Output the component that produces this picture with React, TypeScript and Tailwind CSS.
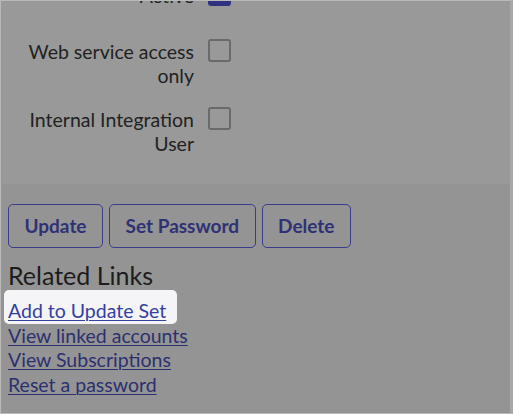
import React from 'react';

type CheckRowProps = {
  label: string,
  checked?: boolean,
  className?: string,
};

const CheckRow = ({ label, checked, className }: CheckRowProps) => (
  <div className={`flex items-start ${className ?? ''}`}>
    <div className="w-[186px] text-right text-[19.5px] leading-[24px] text-[#222222]">{label}</div>
    <div className="ml-[14px]">
      <div
        className={`w-[23px] h-[23px] rounded-[3px] border-2 -mt-px ${checked ? 'bg-[#2f3280] border-[#2f3280]' : 'border-[#6a6a6a]'}`}
      />
    </div>
  </div>
);

const ActionButton = ({ text }: { text: string }) => (
  <button
    type="button"
    className="h-[44px] px-[15.5px] rounded-[5px] border-[1.5px] border-[#3a3d8c] text-[19px] font-bold text-[#2f3175] bg-transparent"
  >
    {text}
  </button>
);

const links = ['View linked accounts', 'View Subscriptions', 'Reset a password'];

const App = () => (
  <div
    className="w-[513px] h-[414px] overflow-hidden border border-[#b9b9b9] border-r-[3px] border-r-[#a8a8a8] bg-[#949494] flex flex-col"
    style={{ fontFamily: 'Lato, "Open Sans", sans-serif' }}
  >
    <div className="bg-[#999999] pl-[7px] h-[183px] shrink-0">
      <CheckRow label="Active" checked className="-mt-[17px] mb-[32px]" />
      <CheckRow label="Web service access only" className="mb-[20px]" />
      <CheckRow label="Internal Integration User" />
    </div>

    <div className="px-[7px] pt-[20px]">
      <div className="flex gap-[6px]">
        <ActionButton text="Update" />
        <ActionButton text="Set Password" />
        <ActionButton text="Delete" />
      </div>

      <h2 className="mt-[13px] text-[25px] leading-[29px] text-[#1c1c1c]">Related Links</h2>

      <div className="flex flex-col items-start text-[19.5px] leading-[24.5px]">
        <div className="-ml-[4px] pl-[4px] pr-[11px] pt-[9px] rounded-[5px] bg-[#f5f5f8]">
          <a href="#" className="underline text-[#3440a0] underline-offset-[2px] decoration-1">Add to Update Set</a>
        </div>
        {links.map((link) => (
          <a key={link} href="#" className="underline text-[#2c306f] underline-offset-[2px] decoration-1">{link}</a>
        ))}
      </div>
    </div>
  </div>
);

export default App;
